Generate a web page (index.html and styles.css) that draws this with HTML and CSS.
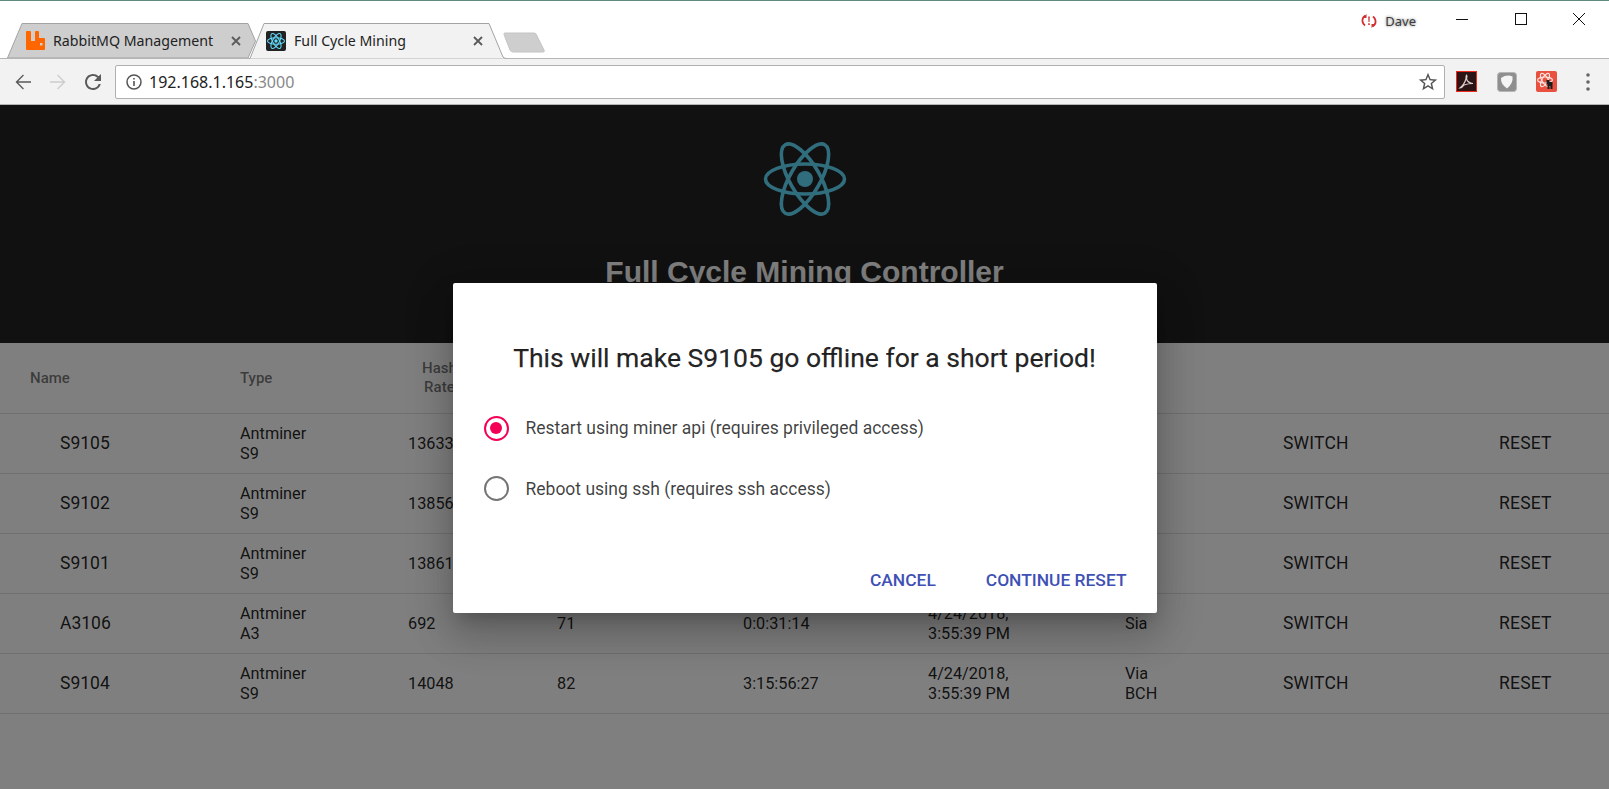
FILE: index.html
```html
<!DOCTYPE html>
<html lang="en">
<head>
    <meta charset="UTF-8">
    <title>Full Cycle Mining</title>
    <link rel="stylesheet" href="styles.css">
</head>
<body>
    <!-- browser window top -->
    <div class="tabstrip">
        <div class="tabs">
            <div class="tab tab-back">
                <svg class="tab-shape" width="249" height="35" viewBox="0 0 249 35"><path d="M0.5 35 L15 0.5 H241 L248.5 18 L241 35 Z" fill="#cecece" stroke="#a3a3a3"/></svg>
                <svg class="favicon" width="19" height="19" viewBox="0 0 19 19"><path fill-rule="evenodd" d="M1 0 H4 Q5 0 5 1 V10 H9 V1 Q9 0 10 0 H12 Q13 0 13 1 V7 H18 Q19 7 19 8 V18 Q19 19 18 19 H1 Q0 19 0 18 V1 Q0 0 1 0 Z M14 12 V14.5 H16.5 V12 Z" fill="#ff6600"/></svg>
                <span class="tab-title">RabbitMQ Management</span>
                <svg class="tab-close" width="10" height="10" viewBox="0 0 10 10"><path d="M1 1 L9 9 M9 1 L1 9" stroke="#5a5a5a" stroke-width="1.8"/></svg>
            </div>
            <div class="tab tab-front">
                <svg class="tab-shape" width="257" height="36" viewBox="0 0 257 36"><path d="M0 35.5 H1 L15 0.5 H240 L254 34 Q255 35 257 35.5" fill="#f2f2f2" stroke="#a3a3a3"/></svg>
                <svg class="favicon" width="20" height="20" viewBox="0 0 20 20">
                    <rect width="20" height="20" rx="2" fill="#222"/>
                    <g fill="none" stroke="#61dafb" stroke-width="1.1">
                        <ellipse cx="10" cy="10" rx="8.5" ry="3.3"/>
                        <ellipse cx="10" cy="10" rx="8.5" ry="3.3" transform="rotate(60 10 10)"/>
                        <ellipse cx="10" cy="10" rx="8.5" ry="3.3" transform="rotate(120 10 10)"/>
                    </g>
                    <circle cx="10" cy="10" r="1.7" fill="#61dafb"/>
                </svg>
                <span class="tab-title">Full Cycle Mining</span>
                <svg class="tab-close" width="10" height="10" viewBox="0 0 10 10"><path d="M1 1 L9 9 M9 1 L1 9" stroke="#5a5a5a" stroke-width="1.8"/></svg>
            </div>
            <svg class="newtab" width="42" height="21" viewBox="0 0 42 21"><path d="M2 1 Q0.5 1 1 2.5 L7 18 Q8 20 10 20 H40 Q42 20 41 18 L33 2 Q32 1 31 1 Z" fill="#cecece" stroke="#c4c4c4"/></svg>
        </div>
        <div class="winbar">
            <div class="profile">
                <svg width="16" height="14" viewBox="0 0 16 14"><path d="M4.5 1.5 Q1 3.5 1.5 7.5 Q2 10 4 11.5 M11.5 12.5 Q15 10.5 14.5 6.5 Q14 4 12 2.5" fill="none" stroke="#d32f2f" stroke-width="1.8"/><path d="M5.5 0 V4 H2 Z M10.5 14 V10 H14 Z M7.2 2.5 H8.8 L8.5 8 H7.5 Z M7.2 9.2 H8.8 V11 H7.2 Z" fill="#d32f2f"/></svg>
                <span class="profile-name">Dave</span>
            </div>
            <div class="wincontrols">
                <svg width="12" height="12" viewBox="0 0 12 12"><path d="M0 6.5 H12" stroke="#111" stroke-width="1"/></svg>
                <svg width="12" height="12" viewBox="0 0 12 12"><rect x="0.5" y="0.5" width="11" height="11" fill="none" stroke="#111"/></svg>
                <svg width="12" height="12" viewBox="0 0 12 12"><path d="M0 0 L12 12 M12 0 L0 12" stroke="#111" stroke-width="1"/></svg>
            </div>
        </div>
    </div>

    <div class="toolbar">
        <svg class="nav-icon" width="24" height="24" viewBox="0 0 24 24"><path fill="#5a5a5a" d="M20 11.2H7.2l5.7-5.7L12 4.5 4.5 12l7.5 7.5.9-1-5.7-5.7H20z"/></svg>
        <svg class="nav-icon" width="24" height="24" viewBox="0 0 24 24"><path fill="#cdcdcd" d="M4 11.2h12.8l-5.7-5.7.9-1L19.5 12 12 19.5l-.9-1 5.7-5.7H4z"/></svg>
        <svg class="nav-icon" width="24" height="24" viewBox="0 0 24 24"><path fill="#5a5a5a" d="M17.65 6.35A7.958 7.958 0 0 0 12 4c-4.42 0-7.99 3.58-7.99 8s3.57 8 7.99 8c3.73 0 6.84-2.55 7.73-6h-2.08A5.99 5.99 0 0 1 12 18c-3.31 0-6-2.69-6-6s2.69-6 6-6c1.66 0 3.14.69 4.22 1.78L13 11h7V4l-2.35 2.35z"/></svg>
        <div class="omnibox">
            <svg width="16" height="16" viewBox="0 0 16 16"><circle cx="8" cy="8" r="7" fill="none" stroke="#555" stroke-width="1.5"/><path d="M7.2 7 H8.8 V12 H7.2 Z M7.2 4 H8.8 V5.6 H7.2 Z" fill="#555"/></svg>
            <span class="url">192.168.1.165<span class="url-port">:3000</span></span>
            <svg class="star" width="22" height="22" viewBox="0 0 24 24"><path fill="#555" d="M22 9.24l-7.19-.62L12 2 9.19 8.63 2 9.24l5.46 4.73L5.82 21 12 17.27 18.18 21l-1.63-7.03L22 9.24zM12 15.4l-3.76 2.27 1-4.28-3.32-2.88 4.38-.38L12 6.1l1.71 4.04 4.38.38-3.32 2.88 1 4.28L12 15.4z"/></svg>
        </div>
        <div class="extensions">
            <svg width="21" height="21" viewBox="0 0 21 21"><rect x="0.5" y="0.5" width="20" height="20" fill="#2c1414" stroke="#ee2a1c"/><path d="M4 17 Q8 14 10 8 Q10 4 10.5 4 Q11.5 5 10.5 8 Q12 12 17 12.5 Q12 12.5 8 14 Q6 17 4 17 Z" fill="none" stroke="#d9cfcf" stroke-width="1.2"/></svg>
            <svg width="20" height="20" viewBox="0 0 20 20"><rect x="0.5" y="0.5" width="19" height="19" rx="3" fill="#8f8f8f" stroke="#b5b5b5"/><path d="M4 6 Q10 2 15.5 4.5 Q16.5 11 10 16.5 Q3.5 12 4 6 Z" fill="#f5f5f5"/></svg>
            <svg width="21" height="21" viewBox="0 0 21 21">
                <rect width="21" height="21" rx="2" fill="#e8503f"/>
                <g fill="none" stroke="#fbe3df" stroke-width="1.2">
                    <ellipse cx="9" cy="9" rx="7.5" ry="3"/>
                    <ellipse cx="9" cy="9" rx="7.5" ry="3" transform="rotate(60 9 9)"/>
                    <ellipse cx="9" cy="9" rx="7.5" ry="3" transform="rotate(120 9 9)"/>
                </g>
                <path d="M10.5 9 h3 v2 h3 v7 h-2 v-3 h-1 v3 h-2 v-5 h-1 z" fill="#1c1c1c"/>
            </svg>
            <svg class="menu-dots" width="4" height="18" viewBox="0 0 4 18"><circle cx="2" cy="2" r="1.8" fill="#666"/><circle cx="2" cy="9" r="1.8" fill="#666"/><circle cx="2" cy="16" r="1.8" fill="#666"/></svg>
        </div>
    </div>

    <!-- the app -->
    <div class="page">
        <header class="app-header">
            <svg class="app-logo" width="84" height="90" viewBox="0 0 84 90">
                <g fill="none" stroke="#61dafb" stroke-width="3.6">
                    <ellipse cx="42" cy="45" rx="39.5" ry="15"/>
                    <ellipse cx="42" cy="45" rx="39.5" ry="15" transform="rotate(60 42 45)"/>
                    <ellipse cx="42" cy="45" rx="39.5" ry="15" transform="rotate(120 42 45)"/>
                </g>
                <circle cx="42" cy="45" r="8" fill="#61dafb"/>
            </svg>
            <h1 class="app-title">Full Cycle Mining Controller</h1>
        </header>

        <table class="miners">
            <colgroup>
                <col class="col-name"><col class="col-type"><col class="col-hash"><col class="col-temp"><col class="col-up"><col class="col-date"><col class="col-pool"><col class="col-switch"><col class="col-reset">
            </colgroup>
            <thead>
                <tr>
                    <th class="th-name">Name</th>
                    <th>Type</th>
                    <th><span class="th-hash">Hash<br>Rate</span></th>
                    <th></th><th></th><th></th><th></th><th></th><th></th>
                </tr>
            </thead>
            <tbody>
                <tr>
                    <td class="miner-name">S9105</td>
                    <td>Antminer<br>S9</td>
                    <td>13633</td>
                    <td></td><td></td><td></td><td></td>
                    <td><span class="action">SWITCH</span></td>
                    <td><span class="action">RESET</span></td>
                </tr>
                <tr>
                    <td class="miner-name">S9102</td>
                    <td>Antminer<br>S9</td>
                    <td>13856</td>
                    <td></td><td></td><td></td><td></td>
                    <td><span class="action">SWITCH</span></td>
                    <td><span class="action">RESET</span></td>
                </tr>
                <tr>
                    <td class="miner-name">S9101</td>
                    <td>Antminer<br>S9</td>
                    <td>13861</td>
                    <td></td><td></td><td></td><td></td>
                    <td><span class="action">SWITCH</span></td>
                    <td><span class="action">RESET</span></td>
                </tr>
                <tr>
                    <td class="miner-name">A3106</td>
                    <td>Antminer<br>A3</td>
                    <td>692</td>
                    <td>71</td>
                    <td>0:0:31:14</td>
                    <td>4/24/2018,<br>3:55:39 PM</td>
                    <td>Sia</td>
                    <td><span class="action">SWITCH</span></td>
                    <td><span class="action">RESET</span></td>
                </tr>
                <tr>
                    <td class="miner-name">S9104</td>
                    <td>Antminer<br>S9</td>
                    <td>14048</td>
                    <td>82</td>
                    <td>3:15:56:27</td>
                    <td>4/24/2018,<br>3:55:39 PM</td>
                    <td>Via<br>BCH</td>
                    <td><span class="action">SWITCH</span></td>
                    <td><span class="action">RESET</span></td>
                </tr>
            </tbody>
        </table>

        <div class="backdrop">
            <div class="dialog">
                <h2 class="dialog-title">This will make S9105 go offline for a short period!</h2>
                <div class="radio-row">
                    <span class="radio radio-on"></span>
                    <span class="radio-label">Restart using miner api (requires privileged access)</span>
                </div>
                <div class="radio-row">
                    <span class="radio"></span>
                    <span class="radio-label">Reboot using ssh (requires ssh access)</span>
                </div>
                <div class="dialog-actions">
                    <button class="dialog-btn">Cancel</button>
                    <button class="dialog-btn">Continue Reset</button>
                </div>
            </div>
        </div>
    </div>
</body>
</html>
```

FILE: styles.css
```css
* {
    box-sizing: border-box;
}
body {
    margin: 0;
    height: 789px;
    overflow: hidden;
    background-color: #fff;
    font-family: Roboto, sans-serif;
}

/* browser chrome */
.tabstrip {
    display: flex;
    justify-content: space-between;
    height: 58px;
    border-top: 1px solid #5f8a80;
    background-color: #fff;
}
.tabs {
    display: flex;
    align-items: flex-start;
    padding: 22px 0 0 7px;
}
.tab {
    position: relative;
    display: flex;
    align-items: center;
    height: 35px;
}
.tab-shape {
    position: absolute;
    left: 0;
    top: 0;
}
.tab-back {
    width: 249px;
    padding-left: 19px;
}
.tab-front {
    z-index: 1;
    width: 257px;
    margin-left: -7px;
    padding-left: 17px;
}
.favicon, .tab-title {
    position: relative;
}
.tab-title {
    margin-left: 8px;
    font-family: "Noto Sans", sans-serif;
    font-size: 14.2px;
    color: #222;
    white-space: nowrap;
}
.tab-close {
    position: absolute;
    top: 13px;
    right: 15px;
}
.tab-front .tab-close {
    right: 23px;
}
.newtab {
    margin: 9px 0 0 -3px;
}
.winbar {
    display: flex;
    align-items: flex-start;
    padding-top: 11px;
}
.profile {
    display: flex;
    align-items: center;
    gap: 8px;
}
.profile-name {
    font-family: "Noto Sans", sans-serif;
    font-size: 13px;
    color: #3c3c3c;
    text-shadow: 0 0 3px #777;
}
.wincontrols {
    display: flex;
    gap: 46.5px;
    margin: 1px 24px 0 40px;
}

.toolbar {
    display: flex;
    align-items: center;
    height: 47px;
    padding: 0 19px 0 11px;
    border-top: 1px solid #b5b5b5;
    border-bottom: 1px solid #b5b5b5;
    background-color: #f2f2f2;
}
.nav-icon {
    margin-right: 11px;
}
.omnibox {
    display: flex;
    align-items: center;
    flex: 1;
    height: 34px;
    margin-left: -1px;
    padding: 0 5px 0 10px;
    background-color: #fff;
    border: 1px solid #b0b0b0;
    border-radius: 2px;
}
.url {
    margin-left: 7px;
    font-family: "Noto Sans", sans-serif;
    font-size: 16px;
    color: #222;
}
.url-port {
    color: #888;
}
.star {
    margin-left: auto;
}
.extensions {
    display: flex;
    align-items: center;
    gap: 19.5px;
    margin-left: 11px;
}
.menu-dots {
    margin-left: 9.5px;
}

/* app */
.page {
    position: relative;
    height: 684px;
}
.app-header {
    display: flex;
    flex-direction: column;
    align-items: center;
    height: 238px;
    padding-top: 29px;
    background-color: #222;
}
.app-title {
    margin: 31px 0 0;
    font-family: "Liberation Sans", Arial, sans-serif;
    font-size: 30px;
    font-weight: bold;
    color: #fff;
}

.miners {
    width: 100%;
    table-layout: fixed;
    border-collapse: collapse;
}
.col-name { width: 240px; }
.col-type { width: 168px; }
.col-hash { width: 149px; }
.col-temp { width: 186px; }
.col-up { width: 185px; }
.col-date { width: 197px; }
.col-pool { width: 158px; }
.col-switch { width: 216px; }
.miners th {
    height: 70px;
    padding: 1px 0 0;
    text-align: left;
    font-size: 15px;
    font-weight: 500;
    line-height: 19px;
    color: rgba(0, 0, 0, .54);
    border-bottom: 1px solid #e0e0e0;
}
.miners .th-name {
    padding-left: 30px;
}
.th-hash {
    display: inline-block;
    margin-left: 14px;
    text-align: center;
}
.miners td {
    height: 60px;
    padding: 1px 0 0;
    font-size: 16.25px;
    line-height: 19.5px;
    color: rgba(0, 0, 0, .87);
    border-bottom: 1px solid #e0e0e0;
}
.miners .miner-name {
    padding-left: 60px;
    font-size: 17.5px;
}
.action {
    font-size: 17.5px;
    letter-spacing: .2px;
}

/* reset dialog */
.backdrop {
    position: absolute;
    left: 0;
    top: 0;
    right: 0;
    bottom: 0;
    display: flex;
    align-items: center;
    justify-content: center;
    padding-top: 2px;
    background-color: rgba(0, 0, 0, .5);
}
.dialog {
    width: 704px;
    height: 330px;
    padding-top: 60px;
    background-color: #fff;
    border-radius: 2px;
    box-shadow: 0 11px 15px -7px rgba(0, 0, 0, .2), 0 24px 38px 3px rgba(0, 0, 0, .14), 0 9px 46px 8px rgba(0, 0, 0, .12);
}
.dialog-title {
    margin: 0 0 25px;
    text-align: center;
    font-size: 26.5px;
    font-weight: 400;
    line-height: 30px;
    color: rgba(0, 0, 0, .87);
    -webkit-text-stroke: .25px rgba(0, 0, 0, .87);
}
.radio-row {
    display: flex;
    align-items: center;
    height: 60.5px;
    padding-left: 31px;
}
.radio {
    position: relative;
    width: 25px;
    height: 25px;
    margin-right: 17px;
    border: 2.5px solid #757575;
    border-radius: 50%;
}
.radio-on {
    border-color: #f50057;
}
.radio-on::after {
    content: "";
    position: absolute;
    left: 4px;
    top: 4px;
    width: 12px;
    height: 12px;
    border-radius: 50%;
    background-color: #f50057;
}
.radio-label {
    font-size: 17.5px;
    color: rgba(0, 0, 0, .75);
}
.dialog-actions {
    display: flex;
    justify-content: flex-end;
    gap: 18px;
    margin-top: 43px;
    padding-right: 14px;
}
.dialog-btn {
    height: 36px;
    padding: 0 16px;
    background: none;
    border: 0;
    font-family: Roboto, sans-serif;
    font-size: 17.4px;
    font-weight: 500;
    text-transform: uppercase;
    color: #3f51b5;
}
```
